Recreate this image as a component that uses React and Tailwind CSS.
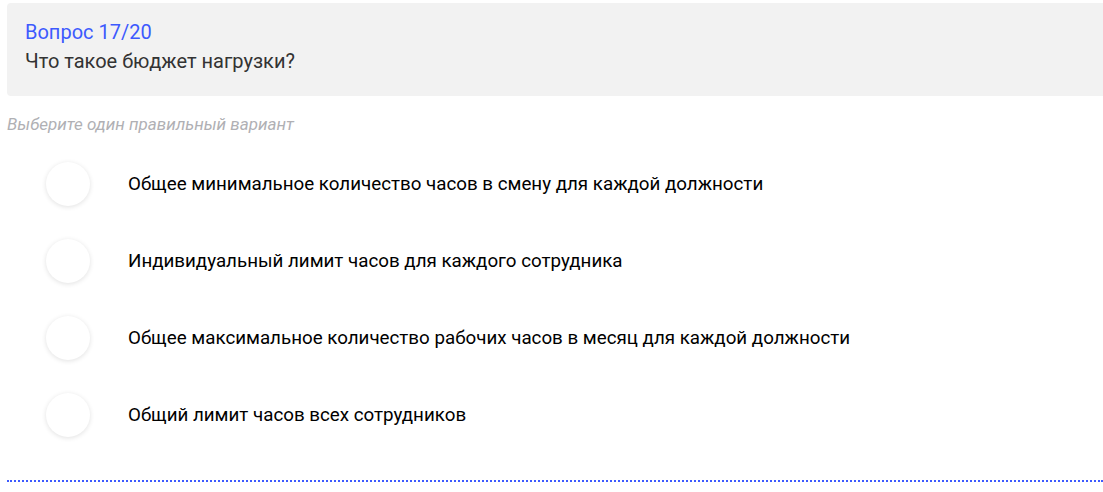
import React from "react";

const options = [
  "Общее минимальное количество часов в смену для каждой должности",
  "Индивидуальный лимит часов для каждого сотрудника",
  "Общее максимальное количество рабочих часов в месяц для каждой должности",
  "Общий лимит часов всех сотрудников",
];

export default function App() {
  return (
    <div className="min-h-screen bg-white pl-[7px] pt-[3px]" style={{ fontFamily: "Roboto, 'Noto Sans', sans-serif" }}>
      {/* Question header */}
      <div className="rounded-l bg-[#f2f2f2] px-[18px] pt-[15px] pb-[20px]">
        <div className="text-[20px] leading-[29px] text-[#3d5afe]">Вопрос 17/20</div>
        <div className="text-[20px] leading-[29px] text-[#333333]">Что такое бюджет нагрузки?</div>
      </div>

      <div className="mt-[18px] text-[17px] italic leading-[20px] text-[#b0b0b4]">
        Выберите один правильный вариант
      </div>

      {/* Options */}
      <div className="mt-[28px] flex flex-col gap-[33px] pl-[39px]">
        {options.map((text) => (
          <label key={text} className="flex cursor-pointer items-center gap-[38px]">
            <span className="h-[44px] w-[44px] shrink-0 rounded-full bg-white shadow-[0_1px_5px_rgba(0,0,0,0.12)]" />
            <span className="text-[18.75px] text-black">{text}</span>
          </label>
        ))}
      </div>

      <div className="mt-[43px] border-b-2 border-dotted border-[#3d5afe]" />
    </div>
  );
}
